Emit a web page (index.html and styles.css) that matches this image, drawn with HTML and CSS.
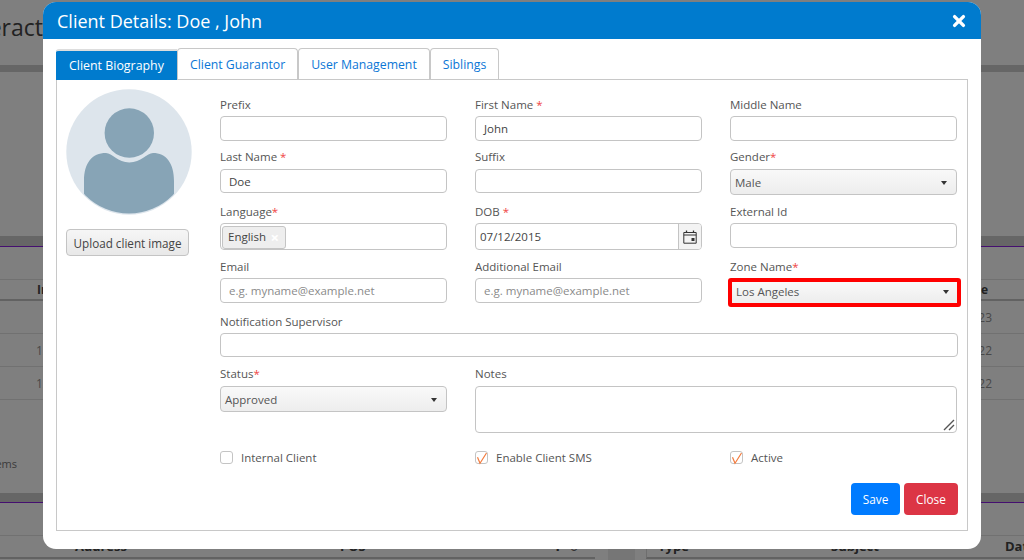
FILE: index.html
```html
<!DOCTYPE html>
<html lang="en">
<head>
<meta charset="utf-8">
<title>Client Details</title>
<link rel="stylesheet" href="styles.css">
</head>
<body>
<div class="page">
  <header class="page-head"><h1>Interact</h1></header>
  <div class="band band-head"></div>
  <div class="spacer"></div>
  <div class="band band-a"></div>
  <div class="rule"></div>
  <div class="toolbar"></div>
  <div class="table-head"><span>In</span><span>Date</span></div>
  <div class="trow"><span></span><span>23</span></div>
  <div class="trow"><span>12</span><span>22</span></div>
  <div class="trow"><span>12</span><span>22</span></div>
  <div class="items"><span>ems</span></div>
  <div class="band band-b"></div>
  <div class="rule"></div>
  <div class="toolbar toolbar-b"></div>
  <section class="sec-bottom">
    <div class="left-head"><span class="addr">Address</span><span class="pos">POS</span><span class="tools">+</span><span class="tools2">○</span></div>
    <div class="gutter"></div>
    <div class="right-head"><span class="type">Type</span><span class="subj">Subject</span><span class="dat">Date</span></div>
  </section>
</div>

<div class="backdrop"></div>

<div class="modal">
  <div class="modal-head">
    <h2>Client Details: Doe , John</h2>
    <svg class="x" viewBox="0 0 14 14" width="14" height="14" aria-hidden="true"><path d="M2.6 2.6 11.4 11.4M11.4 2.6 2.6 11.4" stroke="#fff" stroke-width="3.4" stroke-linecap="round"/></svg>
  </div>
  <div class="modal-body">
    <div class="tabs">
      <a class="tab active">Client Biography</a>
      <a class="tab">Client Guarantor</a>
      <a class="tab">User Management</a>
      <a class="tab">Siblings</a>
    </div>
    <div class="panel">
      <div class="photo-col">
        <svg class="avatar" viewBox="0 0 126 126" width="126" height="126" aria-hidden="true">
          <defs><clipPath id="avatar-clip"><circle cx="63" cy="63" r="61.5"/></clipPath></defs>
          <circle cx="63" cy="63" r="62.7" fill="#dde5ec"/>
          <circle cx="63.3" cy="44" r="24.7" fill="#87a4b6"/>
          <path clip-path="url(#avatar-clip)" d="M18 126 V92 C18 74 26 64 40 64 C46 64 52 73.5 63.3 73.5 C75 73.5 81 64 87 64 C100 64 108 74 108 92 V126 Z" fill="#87a4b6"/>
        </svg>
        <button class="upload" type="button">Upload client image</button>
      </div>
      <form class="form">
        <div class="row r1">
          <div class="field"><label>Prefix</label><div class="input"></div></div>
          <div class="field"><label>First Name <i>*</i></label><div class="input">John</div></div>
          <div class="field"><label>Middle Name</label><div class="input"></div></div>
        </div>
        <div class="row r2">
          <div class="field"><label>Last Name <i>*</i></label><div class="input">Doe</div></div>
          <div class="field"><label>Suffix</label><div class="input"></div></div>
          <div class="field"><label>Gender<i>*</i></label><div class="select">Male<b></b></div></div>
        </div>
        <div class="row r3">
          <div class="field"><label>Language<i>*</i></label><div class="input tags"><span class="tag">English<em>×</em></span></div></div>
          <div class="field"><label>DOB <i>*</i></label>
            <div class="input date"><span>07/12/2015</span><span class="cal">
              <svg viewBox="0 0 14 14" width="14" height="14" aria-hidden="true"><path d="M.8 2.5H13.2V13.2H.8ZM.8 5H13.2" fill="none" stroke="#333" stroke-width="1"/><path d="M3.5.5V3M10.5.5V3" stroke="#333" stroke-width="1.3"/><rect x="8.5" y="8" width="3" height="3" fill="#333"/></svg>
            </span></div>
          </div>
          <div class="field"><label>External Id</label><div class="input"></div></div>
        </div>
        <div class="row r4">
          <div class="field"><label>Email</label><div class="input ph">e.g. myname@example.net</div></div>
          <div class="field"><label>Additional Email</label><div class="input ph">e.g. myname@example.net</div></div>
          <div class="field"><label>Zone Name<i>*</i></label><div class="select hl">Los Angeles<b></b></div></div>
        </div>
        <div class="row-full">
          <label>Notification Supervisor</label><div class="input wide"></div>
        </div>
        <div class="row r6">
          <div class="field"><label>Status<i>*</i></label><div class="select">Approved<b></b></div></div>
          <div class="field span2"><label>Notes</label>
            <div class="input area">
              <svg class="grip" viewBox="0 0 12 12" width="12" height="12" aria-hidden="true"><path d="M1 11 11 1M6 11 11 6" stroke="#555" stroke-width="1.4"/></svg>
            </div>
          </div>
        </div>
        <div class="row r7">
          <div class="check"><span class="box"></span>Internal Client</div>
          <div class="check"><span class="box"><svg viewBox="0 0 14 14" width="14" height="14" aria-hidden="true"><path d="M2.5 6.2 5 12.2 11.5 2" fill="none" stroke="#f47b3d" stroke-width="1.2"/></svg></span>Enable Client SMS</div>
          <div class="check"><span class="box"><svg viewBox="0 0 14 14" width="14" height="14" aria-hidden="true"><path d="M2.5 6.2 5 12.2 11.5 2" fill="none" stroke="#f47b3d" stroke-width="1.2"/></svg></span>Active</div>
        </div>
        <div class="actions">
          <button class="btn save" type="button">Save</button>
          <button class="btn close" type="button">Close</button>
        </div>
      </form>
    </div>
  </div>
</div>
</body>
</html>
```

FILE: styles.css
```css
* { box-sizing: border-box; }
html, body { margin: 0; height: 100%; overflow: hidden; }
body { font-family: "Open Sans", "Noto Sans", sans-serif; font-size: 11.5px; color: #444; background: #fff; }

/* page behind the dialog */
.page { height: 560px; overflow: hidden; display: flex; flex-direction: column; background: #fff; }
.page > * { flex: none; }
.page-head { height: 65px; width: 43px; display: flex; justify-content: flex-end; }
.page-head h1 { margin: 0; font-size: 23px; font-weight: 400; line-height: 55px; color: #444; white-space: nowrap; }
.band { background: #ccc; }
.band-head { height: 7px; }
.spacer { height: 164px; }
.band-a { height: 10px; }
.band-b { height: 9px; }
.rule { height: 1px; background: #8a1fe0; }
.toolbar { height: 32px; }
.toolbar-b { border-bottom: 1px solid #e2e2e2; height: 33px; }
.table-head { height: 22px; border-top: 1px solid #e2e2e2; border-bottom: 2px solid #c4c4c4; display: flex; justify-content: space-between; padding: 0 36px 0 37px; font-size: 12px; font-weight: 700; color: #444; line-height: 20px; }
.trow { height: 33px; border-bottom: 1px solid #e2e2e2; display: flex; justify-content: space-between; padding: 0 32px 0 36px; font-size: 12px; line-height: 33px; color: #909090; }
.items { height: 93px; padding-top: 56px; display: flex; justify-content: flex-start; width: 17px; overflow: hidden; line-height: 16px; font-size: 11px; color: #777; direction: rtl; }
.sec-bottom { height: 24px; display: flex; font-weight: 700; color: #444; font-size: 13px; line-height: 20px; }
.left-head { width: 595px; flex: none; height: 23px; border-bottom: 2px solid #c4c4c4; position: relative; }
.left-head span, .right-head span { position: absolute; top: 0; }
.addr { left: 75px; }
.pos { left: 340px; }
.tools { left: 552px; font-size: 20px; }
.tools2 { left: 569px; font-size: 17px; }
.gutter { width: 27px; height: 24px; margin: 0 11px 0 13px; background: #ececec; flex: none; }
.right-head { flex: 1; height: 23px; border-left: 1px solid #ddd; border-bottom: 2px solid #c4c4c4; position: relative; }
.type { left: 11px; }
.subj { left: 184px; }
.dat { left: 358px; }

/* overlay */
.backdrop { position: fixed; inset: 0; background: rgba(0,0,0,.5); }

/* dialog */
.modal { position: absolute; left: 43px; top: 2px; width: 938px; height: 547px; background: #fff; border-radius: 13px; display: flex; flex-direction: column; }
.modal-head { height: 37px; flex: none; background: #007bce; border-radius: 13px 13px 0 0; display: flex; align-items: center; justify-content: space-between; padding: 0 15px 0 14px; color: #fff; }
.modal-head h2 { margin: 0; font-size: 18px; font-weight: 400; }
.modal-body { flex: 1; min-height: 0; padding: 9px 13px 18px; display: flex; flex-direction: column; }
.tabs { display: flex; height: 31px; flex: none; position: relative; align-items: flex-start; }
.tab { height: 31px; padding: 7px 12px 0; line-height: 17px; border: 1px solid #c8c8c8; border-bottom: 0; border-radius: 4px 4px 0 0; color: #0b76d6; background: #fff; font-size: 12.25px; white-space: nowrap; }
.tab.active { width: 121px; height: 31px; margin-top: 1px; background: #007bce; color: #fff; border: 0; border-top: 2px solid #ddd; border-radius: 3px 0 0 0; padding: 6px 0 0 13px; position: relative; font-size: 12.4px; }
.panel { flex: 1; min-height: 0; border: 1px solid #c8c8c8; display: flex; padding: 9px 9px 0; }
.photo-col { width: 154px; flex: none; display: flex; flex-direction: column; align-items: flex-start; }
.avatar { display: block; }
.upload { margin-top: 14px; width: 123px; height: 27px; padding: 0; border: 1px solid #c4c4c4; border-radius: 4px; background: linear-gradient(#f6f6f6,#e8e8e8); font: inherit; font-size: 11.7px; color: #444; }

.form { flex: 1; display: flex; flex-direction: column; }
label { display: block; line-height: 15px; height: 17px; color: #555; }
label i { color: #f04545; font-style: normal; }
.row { display: grid; grid-template-columns: 227px 227px 227px; column-gap: 28px; flex: none; }
.r1 { height: 52px; margin-top: 8px; }
.r2 { height: 55px; }
.r3 { height: 55px; }
.r4 { height: 55px; }
.row-full { height: 52px; flex: none; }
.input { height: 25px; border: 1px solid #c4c4c4; border-radius: 4px; background: #fff; padding: 0 8px; line-height: 23px; color: #444; margin-top: 2px; }
.r2 .input { height: 24px; margin-top: 3px; line-height: 24px; }
.ph { color: #8a8a8a; }
.input.wide { width: 738px; height: 24px; }
.select { height: 26px; border: 1px solid #c4c4c4; border-radius: 4px; background: linear-gradient(#f9f9f9,#ededed); padding: 0 4px; line-height: 25px; color: #555; position: relative; margin-top: 3px; }
.select b { position: absolute; right: 9px; top: 11px; border: 3px solid transparent; border-top: 4px solid #333; border-bottom: 0; }
.select.hl { width: 233px; height: 29px; margin: 2px 0 0 -2px; border: 4px solid #f00; border-radius: 3px; padding: 0 4px; line-height: 20px; }
.hl b { right: 8px; top: 8px; }
.input.tags { height: 27px; padding: 1px; }
.tag { display: inline-flex; align-items: center; justify-content: space-between; width: 64px; height: 23px; padding: 0 6px 0 5px; line-height: 22px; border: 1px solid #c4c4c4; border-radius: 3px; background: #eee; }
.tag em { color: #fff; font-style: normal; font-weight: 700; font-size: 15px; }
.input.date { height: 27px; display: flex; justify-content: space-between; padding: 0 0 0 4px; line-height: 25px; }
.cal { width: 23px; border-left: 1px solid #c4c4c4; background: #f3f3f3; border-radius: 0 3px 3px 0; display: flex; align-items: center; justify-content: center; }
.r6 { height: 77px; }
.r6 .input { margin-top: 3px; }
.span2 { grid-column: span 2; }
.input.area { width: 482px; height: 47px; position: relative; }
.grip { position: absolute; right: 1px; bottom: 1px; }
.r7 { height: 28px; align-items: center; }
.check { display: flex; align-items: center; color: #555; }
.box { width: 13px; height: 13px; border: 1px solid #c4c4c4; border-radius: 3px; margin-right: 8px; display: block; }
.box svg { display: block; margin: -1px; }
.actions { display: flex; justify-content: flex-end; gap: 4px; margin-top: 12px; width: 738px; flex: none; }
.btn { height: 32px; border: 0; border-radius: 4px; color: #fff; font: inherit; font-size: 11.8px; padding: 0; }
.save { width: 49px; background: #007bff; }
.close { width: 54px; background: #dc3545; }
```
